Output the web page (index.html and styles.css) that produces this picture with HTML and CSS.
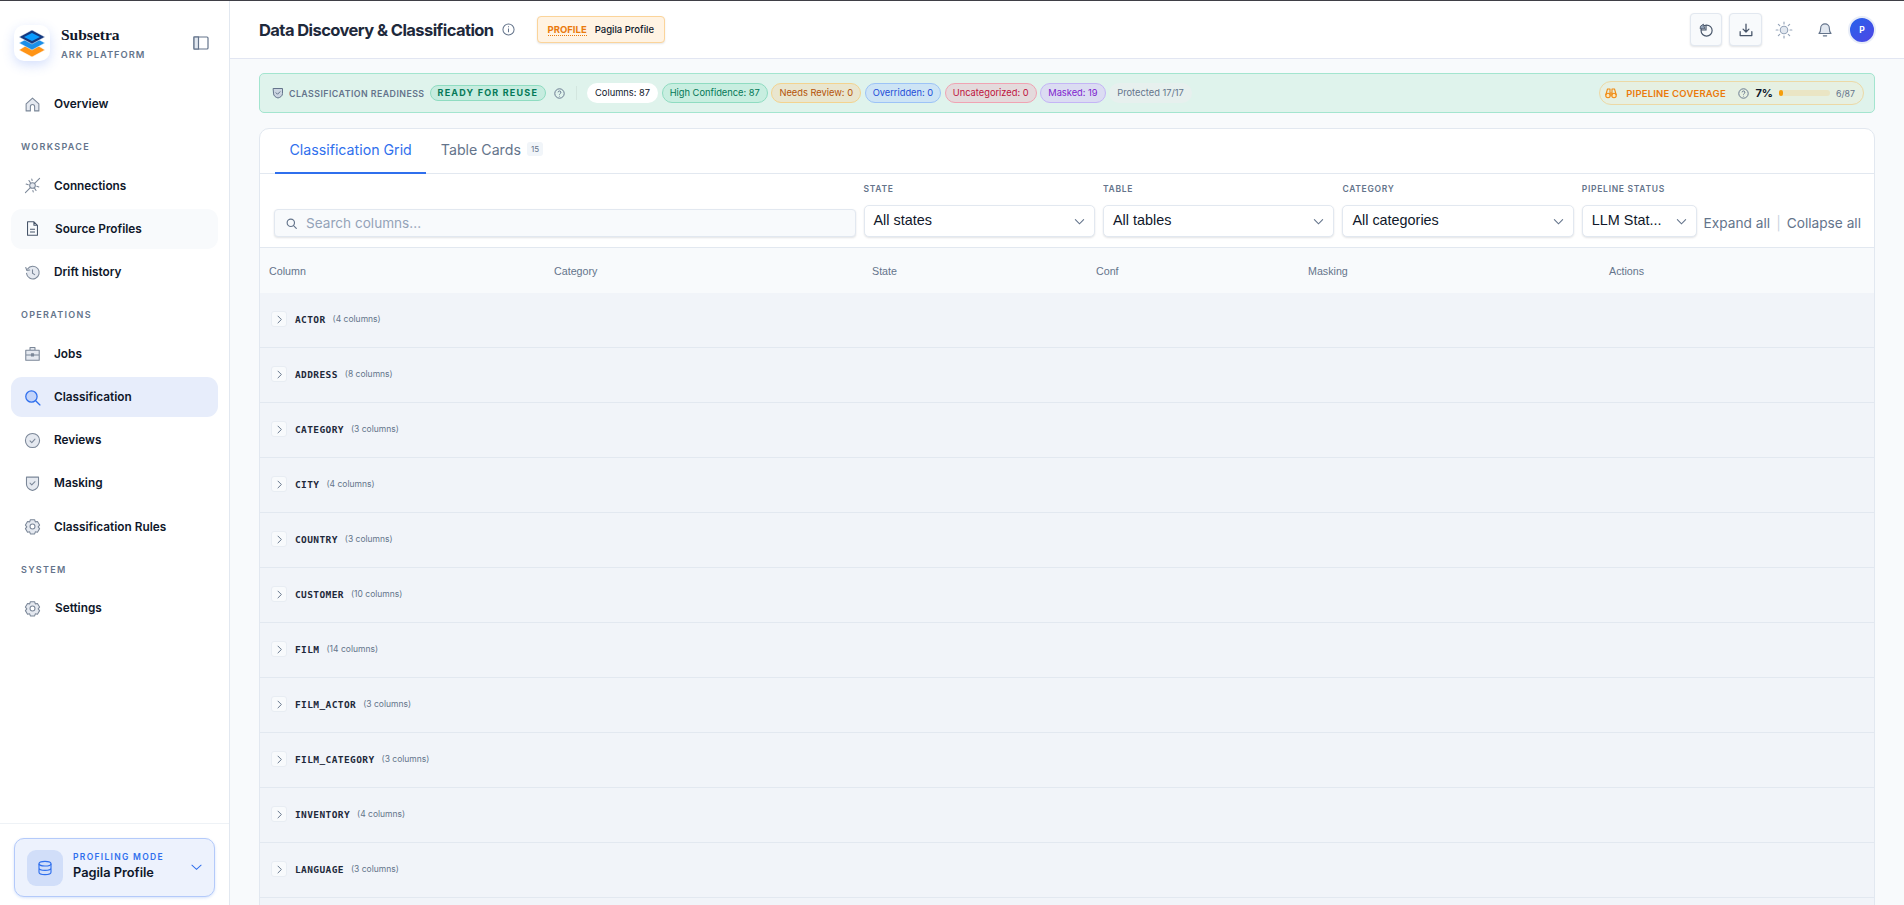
FILE: index.html
```html
<!DOCTYPE html>
<html>

<head>
    <title>Data Discovery &amp; Classification</title>
    <meta charset="UTF-8">
    <link rel="stylesheet" href="styles.css">
</head>

<body>
    <div class="app">
        <aside class="sidebar">
            <div class="brand">
                <div class="logo">
                    <svg width="26" height="27" viewBox="0 0 26 27" stroke="#fff" stroke-width=".5">
                        <path d="M13 12l13 8-13 7-13-7z" fill="#ff9416"/>
                        <path d="M13 6l13 7-13 7-13-7z" fill="#1c8fe8"/>
                        <path d="M13 0l13 7-13 7-13-7z" fill="#14387f"/>
                        <path d="M13 3l8 4-8 4-8-4z" fill="#0a9cff" stroke="none"/>
                    </svg>
                </div>
                <div class="brand_text">
                    <div class="brand_name">Subsetra</div>
                    <div class="brand_sub">ARK PLATFORM</div>
                </div>
                <svg class="toggle" width="16" height="16" viewBox="0 0 16 16" fill="none" stroke="#64748b" stroke-width="1.200">
                    <rect x="1" y="2" width="14" height="12" rx="1"/>
                    <rect x="1" y="2" width="4.500" height="12" fill="#e2e8f0"/>
                </svg>
            </div>

            <nav class="nav">
                <a class="nav_item">
                    <svg class="nav_icon" viewBox="0 0 24 24" fill="#e5e9f0" stroke="#7b8798" stroke-width="1.500" stroke-linejoin="round"><path d="M3 11l9-8 9 8v10h-6v-6a3 3 0 0 0-6 0v6H3z"/></svg>
                    Overview
                </a>
                <div class="nav_label">WORKSPACE</div>
                <a class="nav_item">
                    <svg class="nav_icon" viewBox="0 0 24 24" fill="#e5e9f0" stroke="#7b8798" stroke-width="1.500" stroke-linecap="round"><circle cx="12" cy="12" r="4"/><path d="M2 22l7-7M15 9l7-7M7 5l2 3M17 19l-2-3M3 10l3 1M21 14l-3-1M11 3l.5 2M13 21l-.500-2"/></svg>
                    Connections
                </a>
                <a class="nav_item nav_hover nav_wide">
                    <svg class="nav_icon" viewBox="0 0 24 24" fill="none" stroke="#475569" stroke-width="1.500" stroke-linejoin="round"><path d="M5 2.500h9l5 5v14H5zM14 2.500v5h5M8.500 13h7M8.500 17h7"/></svg>
                    Source Profiles
                </a>
                <a class="nav_item">
                    <svg class="nav_icon" viewBox="0 0 24 24" fill="#e5e9f0" stroke="#7b8798" stroke-width="1.500" stroke-linecap="round"><path d="M5 7a9 9 0 1 1-1.500 6" /><path d="M2.500 5l1.500 4 4-.5M12 8v5l3 2" fill="none"/></svg>
                    Drift history
                </a>
                <div class="nav_label">OPERATIONS</div>
                <a class="nav_item">
                    <svg class="nav_icon" viewBox="0 0 24 24" fill="#e5e9f0" stroke="#7b8798" stroke-width="1.500" stroke-linejoin="round"><path d="M2.500 7.500h19v14h-19zM8.500 7.500v-4h7v4M2.500 14h19"/><rect x="10.500" y="12.500" width="3" height="3" fill="#7b8798"/></svg>
                    Jobs
                </a>
                <a class="nav_item nav_active">
                    <svg class="nav_icon" viewBox="0 0 24 24" fill="#c3d4fa" stroke="#2f6fed" stroke-width="1.800" stroke-linecap="round"><circle cx="10.500" cy="10.500" r="8"/><path d="M16.500 16.500l6 6"/></svg>
                    Classification
                </a>
                <a class="nav_item">
                    <svg class="nav_icon" viewBox="0 0 24 24" fill="#e5e9f0" stroke="#7b8798" stroke-width="1.500" stroke-linecap="round" stroke-linejoin="round"><circle cx="12" cy="12" r="10"/><path d="M8.500 12.500l2.500 2.500 4.500-5" fill="none"/></svg>
                    Reviews
                </a>
                <a class="nav_item">
                    <svg class="nav_icon" viewBox="0 0 24 24" fill="#e5e9f0" stroke="#7b8798" stroke-width="1.500" stroke-linecap="round" stroke-linejoin="round"><path d="M3.500 3h17v10c0 5-4 7.500-8.500 9C7.500 20.500 3.500 18 3.500 13z"/><path d="M8.500 11.500l2.500 2.500 4.500-4.500" fill="none"/></svg>
                    Masking
                </a>
                <a class="nav_item">
                    <svg class="nav_icon" viewBox="0 0 24 24" fill="#e5e9f0" stroke="#7b8798" stroke-width="1.500" stroke-linejoin="round"><path d="M9 2.500h6l1 3 3-.5 3 5-2 2.500 2 2.500-3 5-3-.5-1 3H9l-1-3-3 .5-3-5 2-2.500-2-2.500 3-5 3 .5z"/><circle cx="12" cy="12" r="3.500" fill="#fff"/></svg>
                    Classification Rules
                </a>
                <div class="nav_label">SYSTEM</div>
                <a class="nav_item nav_wide">
                    <svg class="nav_icon" viewBox="0 0 24 24" fill="#e5e9f0" stroke="#7b8798" stroke-width="1.500" stroke-linejoin="round"><path d="M9 2.500h6l1 3 3-.5 3 5-2 2.500 2 2.500-3 5-3-.5-1 3H9l-1-3-3 .5-3-5 2-2.500-2-2.500 3-5 3 .5z"/><circle cx="12" cy="12" r="3.500" fill="#fff"/></svg>
                    Settings
                </a>
            </nav>

            <div class="side_foot">
                <div class="mode_card">
                    <div class="mode_icon">
                        <svg width="16" height="16" viewBox="0 0 24 24" fill="none" stroke="#2f6fed" stroke-width="1.700"><ellipse cx="12" cy="5.500" rx="9" ry="3.500"/><path d="M3 5.500v13c0 2 4 3.500 9 3.500s9-1.500 9-3.500v-13M3 12c0 2 4 3.500 9 3.500s9-1.500 9-3.500"/></svg>
                    </div>
                    <div class="mode_text">
                        <div class="mode_label">PROFILING MODE</div>
                        <div class="mode_name">Pagila Profile</div>
                    </div>
                    <svg class="mode_chev" width="11" height="11" viewBox="0 0 12 12" fill="none" stroke="#2f6fed" stroke-width="1.100" stroke-linecap="round"><path d="M1 3.500L6 8l5-4.500"/></svg>
                </div>
            </div>
        </aside>

        <main class="main">
            <header class="topbar">
                <h1>Data Discovery &amp; Classification</h1>
                <svg class="info" width="13" height="13" viewBox="0 0 14 14" fill="none" stroke="#64748b" stroke-width="1.100"><circle cx="7" cy="7" r="6"/><path d="M7 6v4M7 3.500v1"/></svg>
                <div class="profile_chip">
                    <span class="profile_tag">PROFILE</span>
                    <span>Pagila Profile</span>
                </div>
                <div class="top_actions">
                    <button class="icon_btn icon_first">
                        <svg width="14" height="14" viewBox="0 0 24 24" fill="none" stroke="#475569" stroke-width="2"><circle cx="13" cy="13" r="9.500"/><path d="M12 3.500V12H3.500" /><path d="M2.500 5.500l5-3.500 2.500 8H2z" fill="#94a3b8" stroke="#475569" stroke-width="1.500"/></svg>
                    </button>
                    <button class="icon_btn">
                        <svg width="14" height="14" viewBox="0 0 24 24" fill="none" stroke="#475569" stroke-width="2.200" stroke-linecap="round" stroke-linejoin="round"><path d="M12 2v13M7 10.500l5 5 5-5M2 15v6.500h20V15"/></svg>
                    </button>
                    <svg class="sun" width="18" height="18" viewBox="0 0 24 24" fill="#e2e8f0" stroke="#94a3b8" stroke-width="1.500" stroke-linecap="round"><circle cx="12" cy="12" r="5"/><path d="M12 1.500v2.500M12 20v2.500M1.500 12H4M20 12h2.500M4.500 4.500l1.800 1.800M17.700 17.700l1.800 1.800M4.500 19.500l1.800-1.800M17.700 6.300l1.800-1.800"/></svg>
                    <svg class="bell" width="16" height="17" viewBox="0 0 24 24" fill="#e2e8f0" stroke="#64748b" stroke-width="1.700" stroke-linejoin="round"><path d="M3 18c2-2 2.500-3.500 2.500-8a6.500 6.500 0 0 1 13 0c0 4.500.5 6 2.500 8z"/><path d="M9.500 21.500h5" stroke-linecap="round"/></svg>
                    <div class="avatar">P</div>
                </div>
            </header>

            <div class="content">
                <section class="readiness">
                    <svg class="mini" width="12" height="12" viewBox="0 0 24 24" fill="#cbd5e1" stroke="#64748b" stroke-width="2" stroke-linecap="round" stroke-linejoin="round"><path d="M3 3h18v10c0 5-4 7.500-9 9-5-1.500-9-4-9-9z"/><path d="M8 11.500l3 3 5-5" fill="none"/></svg>
                    <span class="ready_label">CLASSIFICATION READINESS</span>
                    <span class="ready_pill">READY FOR REUSE</span>
                    <svg class="help" width="11" height="11" viewBox="0 0 14 14" fill="none" stroke="#64748b" stroke-width="1.200"><circle cx="7" cy="7" r="6"/><path d="M5.200 5.500a1.800 1.800 0 1 1 2.600 1.700c-.6.300-.8.600-.8 1.200M7 10v.8"/></svg>
                    <span class="divider"></span>
                    <span class="stat stat_white">Columns: 87</span>
                    <span class="stat stat_green">High Confidence: 87</span>
                    <span class="stat stat_amber">Needs Review: 0</span>
                    <span class="stat stat_blue">Overridden: 0</span>
                    <span class="stat stat_red">Uncategorized: 0</span>
                    <span class="stat stat_purple">Masked: 19</span>
                    <span class="stat stat_grey">Protected 17/17</span>

                    <div class="coverage">
                        <svg width="12" height="12" viewBox="0 0 24 24" fill="#fde7b8" stroke="#f08a12" stroke-width="2.200" stroke-linejoin="round"><circle cx="6" cy="17" r="4.500"/><circle cx="18" cy="17" r="4.500"/><path d="M1.500 16L5 4h5v13M22.500 16L19 4h-5v13M10 12h4" fill="none"/></svg>
                        <span class="cov_label">PIPELINE COVERAGE</span>
                        <svg class="help" width="11" height="11" viewBox="0 0 14 14" fill="none" stroke="#64748b" stroke-width="1.200"><circle cx="7" cy="7" r="6"/><path d="M5.200 5.500a1.800 1.800 0 1 1 2.600 1.700c-.6.300-.8.600-.8 1.200M7 10v.8"/></svg>
                        <span class="cov_pct">7%</span>
                        <span class="cov_bar"><span class="cov_fill" style="width: 7%"></span></span>
                        <span class="cov_num">6/87</span>
                    </div>
                </section>

                <section class="card">
                    <div class="tabs">
                        <a class="tab tab_active">Classification Grid</a>
                        <a class="tab">Table Cards <span class="tab_badge">15</span></a>
                    </div>

                    <div class="filters">
                        <div class="search">
                            <svg width="11" height="11" viewBox="0 0 24 24" fill="none" stroke="#64748b" stroke-width="2.500" stroke-linecap="round"><circle cx="10.500" cy="10.500" r="8"/><path d="M16.500 16.500l6 6"/></svg>
                            <span>Search columns...</span>
                        </div>
                        <div class="field">
                            <label>STATE</label>
                            <div class="select">All states<svg viewBox="0 0 12 12"><path d="M1.500 4L6 8.500 10.500 4"/></svg></div>
                        </div>
                        <div class="field">
                            <label>TABLE</label>
                            <div class="select">All tables<svg viewBox="0 0 12 12"><path d="M1.500 4L6 8.500 10.500 4"/></svg></div>
                        </div>
                        <div class="field">
                            <label>CATEGORY</label>
                            <div class="select">All categories<svg viewBox="0 0 12 12"><path d="M1.500 4L6 8.500 10.500 4"/></svg></div>
                        </div>
                        <div class="field field_small">
                            <label>PIPELINE STATUS</label>
                            <div class="select">LLM Stat...<svg viewBox="0 0 12 12"><path d="M1.500 4L6 8.500 10.500 4"/></svg></div>
                        </div>
                        <div class="links">
                            <a>Expand all</a><span class="sep">|</span><a>Collapse all</a>
                        </div>
                    </div>

                    <div class="grid_head">
                        <div class="c1">Column</div>
                        <div class="c2">Category</div>
                        <div class="c3">State</div>
                        <div class="c4">Conf</div>
                        <div class="c5">Masking</div>
                        <div class="c6">Actions</div>
                    </div>

                    <div class="group"><span class="expand"><svg viewBox="0 0 12 12"><path d="M4 1.500L8.500 6 4 10.500"/></svg></span><b>ACTOR</b><small>(4 columns)</small></div>
                    <div class="group"><span class="expand"><svg viewBox="0 0 12 12"><path d="M4 1.500L8.500 6 4 10.500"/></svg></span><b>ADDRESS</b><small>(8 columns)</small></div>
                    <div class="group"><span class="expand"><svg viewBox="0 0 12 12"><path d="M4 1.500L8.500 6 4 10.500"/></svg></span><b>CATEGORY</b><small>(3 columns)</small></div>
                    <div class="group"><span class="expand"><svg viewBox="0 0 12 12"><path d="M4 1.500L8.500 6 4 10.500"/></svg></span><b>CITY</b><small>(4 columns)</small></div>
                    <div class="group"><span class="expand"><svg viewBox="0 0 12 12"><path d="M4 1.500L8.500 6 4 10.500"/></svg></span><b>COUNTRY</b><small>(3 columns)</small></div>
                    <div class="group"><span class="expand"><svg viewBox="0 0 12 12"><path d="M4 1.500L8.500 6 4 10.500"/></svg></span><b>CUSTOMER</b><small>(10 columns)</small></div>
                    <div class="group"><span class="expand"><svg viewBox="0 0 12 12"><path d="M4 1.500L8.500 6 4 10.500"/></svg></span><b>FILM</b><small>(14 columns)</small></div>
                    <div class="group"><span class="expand"><svg viewBox="0 0 12 12"><path d="M4 1.500L8.500 6 4 10.500"/></svg></span><b>FILM_ACTOR</b><small>(3 columns)</small></div>
                    <div class="group"><span class="expand"><svg viewBox="0 0 12 12"><path d="M4 1.500L8.500 6 4 10.500"/></svg></span><b>FILM_CATEGORY</b><small>(3 columns)</small></div>
                    <div class="group"><span class="expand"><svg viewBox="0 0 12 12"><path d="M4 1.500L8.500 6 4 10.500"/></svg></span><b>INVENTORY</b><small>(4 columns)</small></div>
                    <div class="group"><span class="expand"><svg viewBox="0 0 12 12"><path d="M4 1.500L8.500 6 4 10.500"/></svg></span><b>LANGUAGE</b><small>(3 columns)</small></div>
                    <div class="group"></div>
                </section>
            </div>
        </main>
    </div>
</body>

</html>
```

FILE: styles.css
```css
* {
    margin: 0;
    padding: 0;
    box-sizing: border-box;
}

html,
body {
    height: 100%;
    overflow: hidden;
}

body {
    font-family: Inter, "Liberation Sans", sans-serif;
    color: #0f172a;
    background: #f8fafc;
    border-top: 1px solid #3f3f46;
}

.app {
    display: flex;
    height: 100%;
}

/* sidebar */
.sidebar {
    width: 230px;
    flex-shrink: 0;
    display: flex;
    flex-direction: column;
    background: #fff;
    border-right: 1px solid #e2e8f0;
}

.brand {
    display: flex;
    align-items: flex-start;
    padding: 24px 20px 0 14px;
    height: 83px;
}

.logo {
    width: 36px;
    height: 36px;
    display: flex;
    align-items: center;
    justify-content: center;
    background: #fff;
    border-radius: 10px;
    box-shadow: 0 4px 12px rgba(59, 110, 240, .22);
}

.brand_text {
    margin-left: 11px;
    flex: 1;
}

.brand_name {
    font-family: "Liberation Serif", serif;
    font-weight: 700;
    font-size: 15.500px;
    line-height: 19px;
}

.brand_sub {
    margin-top: 5px;
    font-size: 9.300px;
    line-height: 12px;
    font-weight: 600;
    letter-spacing: 1px;
    color: #64748b;
}

.toggle {
    margin-top: 10px;
}

.nav {
    flex: 1;
    padding: 0 11px;
    display: flex;
    flex-direction: column;
    gap: 3.200px;
}

.nav_item {
    display: flex;
    align-items: center;
    height: 40px;
    padding-left: 13px;
    gap: 13px;
    border-radius: 11px;
    font-size: 11.800px;
    font-weight: 600;
    color: #0f172a;
}

.nav_wide {
    gap: 14px;
}

.nav_icon {
    width: 17px;
    height: 17px;
    flex-shrink: 0;
}

.nav_hover {
    background: #f8fafc;
}

.nav_active {
    background: #e7edfb;
}

.nav_label {
    height: 35.400px;
    padding: 14px 0 0 10px;
    font-size: 9px;
    line-height: 11px;
    font-weight: 600;
    letter-spacing: 1.300px;
    color: #64748b;
}

.side_foot {
    border-top: 1px solid #eef2f6;
    padding: 14px 14px 8px 14px;
}

.mode_card {
    display: flex;
    align-items: center;
    height: 59px;
    padding: 0 12px;
    background: #edf2fd;
    border: 1px solid #b4cafa;
    border-radius: 10px;
    box-shadow: 0 1px 3px rgba(47, 111, 237, .2);
}

.mode_icon {
    width: 36px;
    height: 36px;
    display: flex;
    align-items: center;
    justify-content: center;
    background: #d1def9;
    border-radius: 9px;
}

.mode_text {
    flex: 1;
    margin-left: 10px;
    padding-bottom: 1px;
}

.mode_label {
    font-size: 8.500px;
    line-height: 11px;
    font-weight: 600;
    letter-spacing: 1.300px;
    color: #2f6fed;
}

.mode_name {
    font-size: 12.800px;
    line-height: 19px;
    font-weight: 600;
}

/* top */
.main {
    flex: 1;
    min-width: 0;
    height: 100%;
    display: flex;
    flex-direction: column;
    overflow: hidden;
}

.topbar {
    display: flex;
    align-items: center;
    flex-shrink: 0;
    height: 58px;
    padding: 0 28px 0 29px;
    background: #fff;
    border-bottom: 1px solid #e2e6f2;
}

h1 {
    font-size: 16.500px;
    font-weight: 700;
    letter-spacing: -.57px;
    color: #1e293b;
}

.info {
    margin-left: 8px;
}

.profile_chip {
    display: flex;
    align-items: center;
    gap: 8px;
    height: 27px;
    margin-left: 22px;
    padding: 0 10px;
    background: #fff3e3;
    border: 1px solid #fbd49a;
    border-radius: 4px;
    box-shadow: 0 1px 2px rgba(0, 0, 0, .1);
    font-size: 9.500px;
    font-weight: 500;
}

.profile_tag {
    font-weight: 700;
    color: #ea7a0c;
    border-bottom: 1px dotted #ea7a0c;
}

.top_actions {
    display: flex;
    align-items: center;
    margin-left: auto;
}

.icon_btn {
    width: 33px;
    height: 33px;
    margin-left: 7px;
    display: flex;
    align-items: center;
    justify-content: center;
    background: #f8fafc;
    border: 1px solid #e2e8f0;
    border-radius: 4px;
    box-shadow: 0 1px 2px rgba(15, 23, 42, .12);
}

.icon_first {
    width: 32px;
}

.sun {
    margin-left: 13px;
}

.bell {
    margin-left: 24px;
}

.avatar {
    margin-left: 15px;
    display: flex;
    align-items: center;
    justify-content: center;
    background: linear-gradient(135deg, #2563eb, #4f46e5);
    border: 2px solid #e8edf8;
    border-radius: 50%;
    box-sizing: content-box;
    width: 24px;
    height: 24px;
    color: #fff;
    font-size: 8.500px;
    font-weight: 700;
}

.content {
    flex: 1;
    min-height: 0;
    padding: 14px 29px 0;
    overflow: hidden;
}

/* readiness */
.readiness {
    display: flex;
    align-items: center;
    height: 40px;
    padding: 0 10px 0 12px;
    background: #dff3ec;
    border: 1px solid #a3e5cf;
    border-radius: 5px;
}

.ready_label {
    margin-left: 5px;
    font-size: 8.800px;
    font-weight: 600;
    letter-spacing: .45px;
    color: #64748b;
}

.ready_pill {
    margin-left: 5px;
    padding: 0 7px;
    height: 16px;
    line-height: 14px;
    font-size: 9px;
    font-weight: 700;
    letter-spacing: 1.200px;
    color: #047857;
    background: #c6ecdf;
    border: 1px solid #8fdcc1;
    border-radius: 8px;
}

.help {
    margin-left: 8px;
}

.divider {
    width: 1px;
    height: 14px;
    margin: 0 10px 0 11px;
    background: #d3e6df;
}

.stat {
    height: 20px;
    line-height: 18px;
    margin-right: 3.600px;
    padding: 0 7px;
    font-size: 9.300px;
    white-space: nowrap;
    border: 1px solid transparent;
    border-radius: 10px;
}

.stat_white {
    background: #fff;
    color: #0f172a;
}

.stat_green {
    background: #c8eee0;
    border-color: #8fdcc1;
    color: #047857;
}

.stat_amber {
    background: #e9e6cf;
    border-color: #f3d38f;
    color: #b45309;
}

.stat_blue {
    background: #cde4f5;
    border-color: #9cc3f7;
    color: #1d4ed8;
}

.stat_red {
    background: #e4dadc;
    border-color: #f0a3b3;
    color: #be123c;
}

.stat_purple {
    background: #dbdcf2;
    border-color: #c4b5f6;
    color: #7e22ce;
}

.stat_grey {
    background: #e7f0ee;
    color: #64748b;
}

.coverage {
    display: flex;
    align-items: center;
    margin-left: auto;
    height: 24px;
    padding: 0 8px 0 5px;
    background: #e6f0e2;
    border: 1px solid #ecd9a6;
    border-radius: 12px;
}

.coverage .help {
    margin-left: 12px;
}

.cov_label {
    margin-left: 9px;
    font-size: 9.500px;
    font-weight: 600;
    letter-spacing: .2px;
    color: #ea7a0c;
}

.cov_pct {
    margin-left: 6.500px;
    font-size: 11px;
    font-weight: 700;
}

.cov_bar {
    width: 51px;
    height: 6px;
    margin-left: 6px;
    background: #eae5c4;
    border-radius: 3px;
}

.cov_fill {
    display: block;
    height: 100%;
    background: #f59e0b;
    border-radius: 3px;
}

.cov_num {
    margin-left: 6px;
    font-size: 8.800px;
    color: #64748b;
}

/* card */
.card {
    margin-top: 15px;
    background: #fff;
    border: 1px solid #e2e8f0;
    border-radius: 10px 10px 0 0;
    overflow: hidden;
}

.tabs {
    display: flex;
    height: 45px;
    padding-left: 15px;
    border-bottom: 1px solid #e2e8f0;
}

.tab {
    display: flex;
    align-items: center;
    padding: 0 14.500px 4px;
    font-size: 14.200px;
    color: #64748b;
}

.tab_active {
    padding-bottom: 2px;
    color: #2f6fed;
    border-bottom: 2px solid #2f6fed;
    margin-bottom: -1px;
}

.tab_badge {
    margin-left: 6px;
    padding: 2px 4px;
    font-size: 8px;
    background: #f1f5f9;
    border-radius: 3px;
}

.filters {
    display: flex;
    align-items: flex-end;
    height: 74px;
    padding: 0 13px 10px 14px;
    border-bottom: 1px solid #e2e8f0;
}

.search {
    display: flex;
    align-items: center;
    gap: 8px;
    flex: 0 0 582px;
    height: 28px;
    padding-left: 11px;
    margin-right: 7.500px;
    background: #f8fafc;
    border: 1px solid #e2e8f0;
    border-radius: 4px;
    box-shadow: 0 1px 2px rgba(15, 23, 42, .12);
    font-size: 13.600px;
    color: #94a3b8;
}

.search span {
    margin-left: 1px;
}

.field {
    width: 232px;
    margin-right: 8px;
}

.field_small {
    width: 115px;
    margin-right: 6px;
}

.field label {
    display: block;
    margin-bottom: 10px;
    font-size: 8.500px;
    line-height: 11px;
    font-weight: 600;
    letter-spacing: .7px;
    color: #64748b;
}

.select {
    display: flex;
    align-items: center;
    justify-content: space-between;
    height: 32px;
    padding: 0 9px 2px 9px;
    background: #fff;
    border: 1px solid #e2e8f0;
    border-radius: 5px;
    box-shadow: 0 1px 2px rgba(15, 23, 42, .12);
    font-family: "Liberation Sans", sans-serif;
    font-size: 14.400px;
}

.select svg {
    width: 11px;
    height: 11px;
    margin-top: 2px;
    fill: none;
    stroke: #64748b;
    stroke-width: 1.200;
    stroke-linecap: round;
}

.links {
    display: flex;
    gap: 6px;
    margin-left: 1px;
    line-height: 28px;
    font-size: 13.700px;
    color: #64748b;
    white-space: nowrap;
}

.sep {
    color: #cbd5e1;
}

.grid_head {
    display: flex;
    align-items: center;
    height: 45px;
    padding-left: 9px;
    background: #f8fafc;
    font-family: "Liberation Sans", sans-serif;
    font-size: 10.700px;
    color: #64748b;
}

.c1 {
    width: 285px;
}

.c2 {
    width: 318px;
}

.c3 {
    width: 224px;
}

.c4 {
    width: 212px;
}

.c5 {
    width: 301px;
}

.group {
    display: flex;
    align-items: center;
    height: 55px;
    padding: 0 0 2px 11px;
    background: #f1f4f9;
    border-bottom: 1px solid #e2e8f0;
}

.expand {
    display: flex;
    align-items: center;
    justify-content: center;
    width: 16px;
    height: 16px;
    background: #f8fafc;
    border: 1px solid #e8edf3;
    border-radius: 3px;
}

.expand svg {
    width: 9px;
    height: 9px;
    fill: none;
    stroke: #64748b;
    stroke-width: 1.300;
    stroke-linecap: round;
}

.group b {
    margin-left: 8px;
    font-family: "DejaVu Sans Mono", monospace;
    font-size: 9.500px;
    font-weight: 700;
    letter-spacing: .4px;
    color: #1e293b;
}

.group small {
    margin-left: 7px;
    font-size: 8.500px;
    color: #64748b;
}
```
